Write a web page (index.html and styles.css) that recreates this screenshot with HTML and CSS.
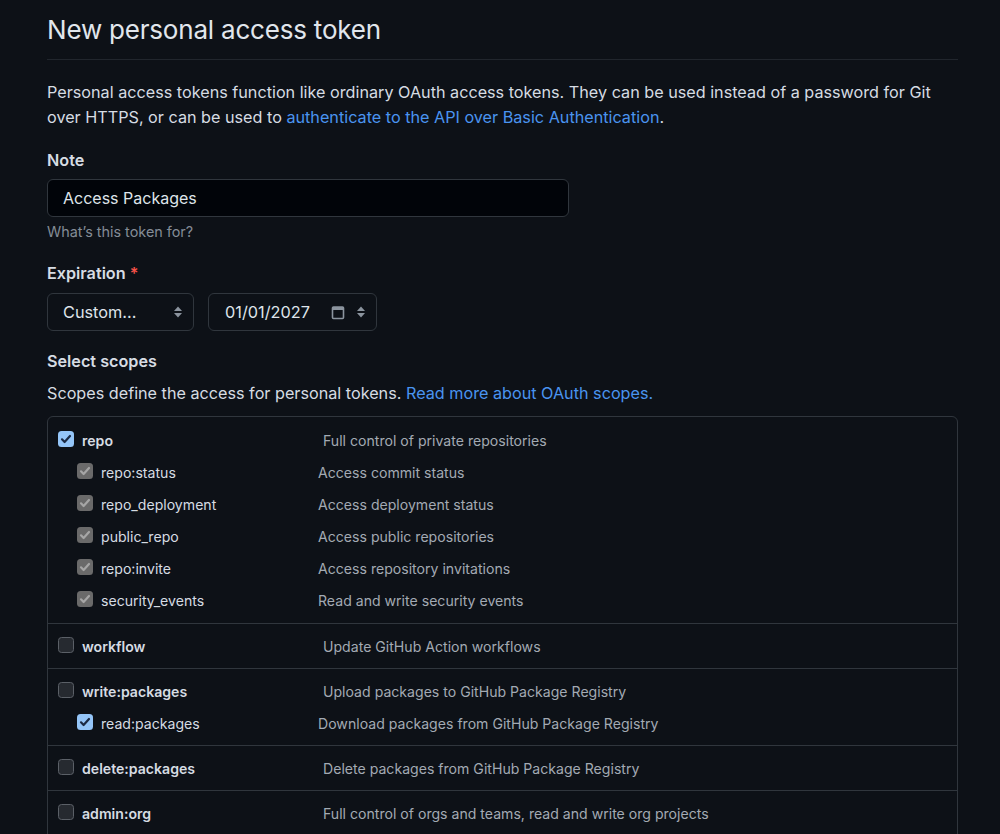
FILE: index.html
```html
<!DOCTYPE html>
<html lang="en">
<head>
<meta charset="utf-8">
<title>New personal access token</title>
<link rel="stylesheet" href="styles.css">
</head>
<body>
<main class="page">
  <h1 class="title">New personal access token</h1>
  <p class="intro">Personal access tokens function like ordinary OAuth access tokens. They can be used instead of a password for Git over HTTPS, or can be used to <a class="link" href="#">authenticate to the API over Basic Authentication</a>.</p>

  <div class="label label-note">Note</div>
  <div class="input">Access Packages</div>
  <div class="hint">What’s this token for?</div>

  <div class="label label-exp">Expiration <span class="req">*</span></div>
  <div class="selects">
    <div class="select sel-custom">
      <span>Custom...</span>
      <svg class="updown" width="10" height="14" viewBox="0 0 10 14"><path d="M5 1.5 9 6H1z" fill="#8b949e"/><path d="M5 12.5 9 8H1z" fill="#8b949e"/></svg>
    </div>
    <div class="select sel-date">
      <span>01/01/2027</span>
      <svg class="cal" width="14" height="15" viewBox="0 0 14 15"><rect x="1.5" y="2" width="11" height="11.5" rx="1" fill="none" stroke="#8b949e" stroke-width="1.6"/><rect x="1.5" y="2" width="11" height="3" fill="#8b949e"/></svg>
      <svg class="updown" width="10" height="14" viewBox="0 0 10 14"><path d="M5 1.5 9 6H1z" fill="#8b949e"/><path d="M5 12.5 9 8H1z" fill="#8b949e"/></svg>
    </div>
  </div>

  <div class="label label-scopes">Select scopes</div>
  <p class="scopes-intro">Scopes define the access for personal tokens. <a class="link" href="#">Read more about OAuth scopes.</a></p>

  <div class="scopes">
    <div class="group first">
      <div class="line top">
        <span class="cb on"><svg viewBox="0 0 16 16"><path d="M4 8.3l2.6 2.7L12 5" fill="none" stroke="#1b2a44" stroke-width="2.2" stroke-linecap="round" stroke-linejoin="round"/></svg></span>
        <span class="name">repo</span><span class="desc">Full control of private repositories</span>
      </div>
      <div class="line sub">
        <span class="cb dim"><svg viewBox="0 0 16 16"><path d="M4 8.3l2.6 2.7L12 5" fill="none" stroke="#a6a6a6" stroke-width="2.2" stroke-linecap="round" stroke-linejoin="round"/></svg></span>
        <span class="name">repo:status</span><span class="desc">Access commit status</span>
      </div>
      <div class="line sub">
        <span class="cb dim"><svg viewBox="0 0 16 16"><path d="M4 8.3l2.6 2.7L12 5" fill="none" stroke="#a6a6a6" stroke-width="2.2" stroke-linecap="round" stroke-linejoin="round"/></svg></span>
        <span class="name">repo_deployment</span><span class="desc">Access deployment status</span>
      </div>
      <div class="line sub">
        <span class="cb dim"><svg viewBox="0 0 16 16"><path d="M4 8.3l2.6 2.7L12 5" fill="none" stroke="#a6a6a6" stroke-width="2.2" stroke-linecap="round" stroke-linejoin="round"/></svg></span>
        <span class="name">public_repo</span><span class="desc">Access public repositories</span>
      </div>
      <div class="line sub">
        <span class="cb dim"><svg viewBox="0 0 16 16"><path d="M4 8.3l2.6 2.7L12 5" fill="none" stroke="#a6a6a6" stroke-width="2.2" stroke-linecap="round" stroke-linejoin="round"/></svg></span>
        <span class="name">repo:invite</span><span class="desc">Access repository invitations</span>
      </div>
      <div class="line sub">
        <span class="cb dim"><svg viewBox="0 0 16 16"><path d="M4 8.3l2.6 2.7L12 5" fill="none" stroke="#a6a6a6" stroke-width="2.2" stroke-linecap="round" stroke-linejoin="round"/></svg></span>
        <span class="name">security_events</span><span class="desc">Read and write security events</span>
      </div>
    </div>
    <div class="group">
      <div class="line top">
        <span class="cb off"></span>
        <span class="name">workflow</span><span class="desc">Update GitHub Action workflows</span>
      </div>
    </div>
    <div class="group">
      <div class="line top">
        <span class="cb off"></span>
        <span class="name">write:packages</span><span class="desc">Upload packages to GitHub Package Registry</span>
      </div>
      <div class="line sub">
        <span class="cb on"><svg viewBox="0 0 16 16"><path d="M4 8.3l2.6 2.7L12 5" fill="none" stroke="#1b2a44" stroke-width="2.2" stroke-linecap="round" stroke-linejoin="round"/></svg></span>
        <span class="name">read:packages</span><span class="desc">Download packages from GitHub Package Registry</span>
      </div>
    </div>
    <div class="group">
      <div class="line top">
        <span class="cb off"></span>
        <span class="name">delete:packages</span><span class="desc">Delete packages from GitHub Package Registry</span>
      </div>
    </div>
    <div class="group">
      <div class="line top">
        <span class="cb off"></span>
        <span class="name">admin:org</span><span class="desc">Full control of orgs and teams, read and write org projects</span>
      </div>
    </div>
  </div>
</main>
</body>
</html>
```
FILE: styles.css
```css
html, body {
  margin: 0;
  padding: 0;
  background: #0d1117;
}
body {
  font-family: Inter, "Noto Sans", "Liberation Sans", sans-serif;
  color: #d6dce3;
  height: 834px;
  overflow: hidden;
}
.page {
  margin-left: 47px;
  width: 911px;
}
.title {
  margin: 0;
  padding: 12px 0 11px;
  font-size: 26px;
  line-height: 36px;
  font-weight: 400;
  color: #e1e6ec;
  letter-spacing: -0.2px;
  border-bottom: 1px solid #21262d;
}
.intro {
  margin: 20px 0 0;
  font-size: 16.2px;
  line-height: 25px;
  color: #d6dce3;
}
.link {
  color: #4a94f0;
  text-decoration: none;
}
.label {
  font-size: 16.2px;
  line-height: 24px;
  font-weight: 600;
  color: #d6dce3;
}
.label-note { margin-top: 18px; }
.label-exp { margin-top: 19px; }
.label-scopes { margin-top: 18px; }
.req { color: #f85149; }
.input {
  margin-top: 7px;
  width: 522px;
  height: 38px;
  box-sizing: border-box;
  border: 1px solid #30363d;
  border-radius: 6px;
  background: #010409;
  padding: 0 15px;
  display: flex;
  align-items: center;
  font-size: 16px;
  color: #dfe4ea;
}
.hint {
  margin-top: 5px;
  font-size: 14.4px;
  line-height: 20px;
  color: #848c96;
}
.selects {
  margin-top: 8px;
  display: flex;
  gap: 14px;
}
.select {
  height: 38px;
  box-sizing: border-box;
  border: 1px solid #30363d;
  border-radius: 6px;
  background: #0d1117;
  display: flex;
  align-items: center;
  font-size: 16.3px;
  color: #dfe4ea;
}
.sel-custom {
  width: 147px;
  padding: 0 10px 0 15px;
  justify-content: space-between;
}
.sel-date {
  width: 169px;
  padding: 0 10px 0 16px;
}
.sel-date .cal { margin-left: auto; margin-right: 11px; }
.scopes-intro {
  margin: 8px 0 0;
  font-size: 16.2px;
  line-height: 25px;
  color: #d6dce3;
}
.scopes {
  margin-top: 10px;
  border: 1px solid #30363d;
  border-radius: 6px;
  height: 500px;
}
.group {
  padding: 6px 0;
}
.group.first { padding: 7px 0; }
.group + .group {
  border-top: 1px solid #30363d;
}
.line {
  display: flex;
  align-items: center;
  height: 32px;
  font-size: 14.1px;
}
.line.top { padding-left: 10px; }
.line.sub { padding-left: 29px; }
.cb {
  width: 16px;
  height: 16px;
  box-sizing: border-box;
  border-radius: 3.5px;
  flex: none;
  display: flex;
  margin-top: -3px;
}
.cb svg { width: 16px; height: 16px; }
.cb.on { background: #94c5f8; }
.cb.dim { background: #6a6a6a; }
.cb.off { background: #262a30; border: 1px solid #5b6067; }
.name {
  margin-left: 8px;
  color: #d6dce3;
}
.line.top .name { width: 241px; font-weight: 600; }
.line.sub .name { width: 217px; }
.desc {
  color: #a3aab3;
}
```
